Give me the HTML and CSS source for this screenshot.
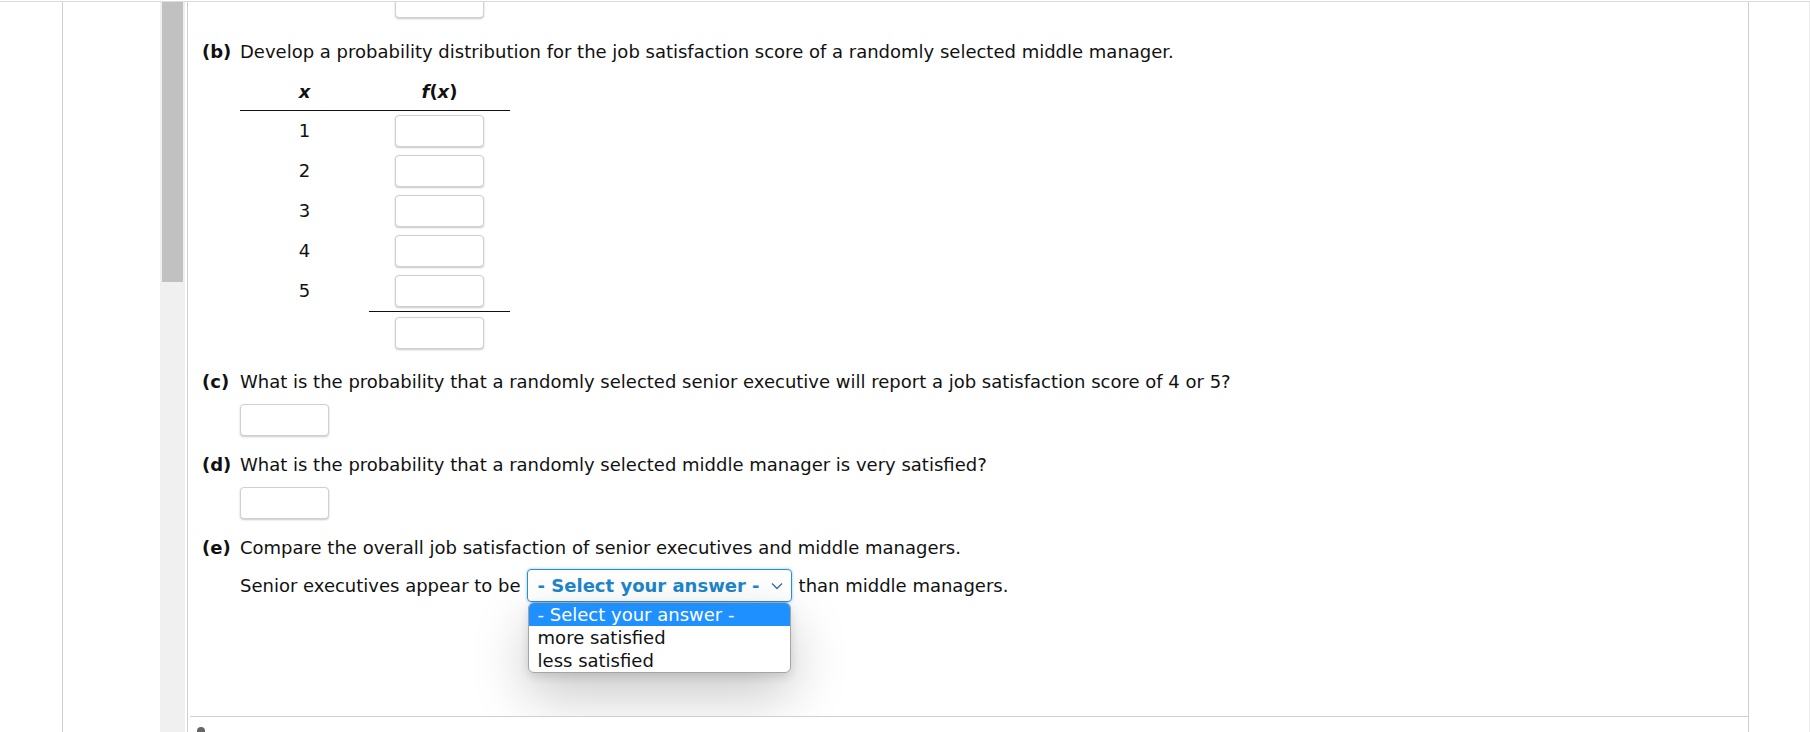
FILE: index.html
```html
<!DOCTYPE html>
<html lang="en">
<head>
<meta charset="utf-8">
<title>Probability distribution</title>
<link rel="stylesheet" href="styles.css">
</head>
<body>
<div class="page">
  <div class="gutter"></div>
  <div class="rail">
    <div class="track"><div class="thumb"></div></div>
  </div>
  <main class="main">
    <div class="qa">
      <div class="content">
        <div class="dist prev">
          <div class="cell"></div>
          <div class="cell"><span class="box"></span></div>
        </div>

        <section class="part part-b">
          <b class="lbl">(b)</b>
          <p class="q">Develop a probability distribution for the job satisfaction score of a randomly selected middle manager.</p>
          <div class="ans">
            <div class="dist">
              <div class="cell head"><i>x</i></div>
              <div class="cell head"><i>f</i>(<i>x</i>)</div>
              <div class="cell">1</div><div class="cell"><span class="box"></span></div>
              <div class="cell">2</div><div class="cell"><span class="box"></span></div>
              <div class="cell">3</div><div class="cell"><span class="box"></span></div>
              <div class="cell">4</div><div class="cell"><span class="box"></span></div>
              <div class="cell">5</div><div class="cell"><span class="box"></span></div>
              <div class="cell total"></div><div class="cell total sum"><span class="box"></span></div>
            </div>
          </div>
        </section>

        <section class="part">
          <b class="lbl">(c)</b>
          <p class="q">What is the probability that a randomly selected senior executive will report a job satisfaction score of 4 or 5?</p>
          <div class="ans single"><span class="box"></span></div>
        </section>

        <section class="part">
          <b class="lbl">(d)</b>
          <p class="q">What is the probability that a randomly selected middle manager is very satisfied?</p>
          <div class="ans single"><span class="box"></span></div>
        </section>

        <section class="part">
          <b class="lbl">(e)</b>
          <p class="q">Compare the overall job satisfaction of senior executives and middle managers.</p>
          <div class="ans sentence">
            <span>Senior executives appear to be</span>
            <span class="select-wrap">
              <span class="select">
                <span>- Select your answer -</span>
                <svg class="chev" width="12" height="8" viewBox="0 0 12 8"><polyline points="1,1.5 6,6.5 11,1.5" fill="none" stroke="#3d6f9e" stroke-width="1.4"/></svg>
              </span>
              <span class="menu">
                <span class="opt on">- Select your answer -</span>
                <span class="opt">more satisfied</span>
                <span class="opt">less satisfied</span>
              </span>
            </span>
            <span>than middle managers.</span>
          </div>
        </section>
      </div>
    </div>
    <div class="foot">
      <svg width="10" height="8" viewBox="0 0 10 8"><circle cx="5" cy="6" r="4" fill="#666"/></svg>
    </div>
  </main>
  <div class="edge"></div>
</div>
</body>
</html>
```

FILE: styles.css
```css
html, body {
  margin: 0;
  padding: 0;
  background: #fff;
}

body {
  width: 1810px;
  height: 732px;
  overflow: hidden;
  font-family: "DejaVu Sans", Verdana, sans-serif;
  font-size: 18px;
  line-height: 22px;
  color: #111;
}

.page {
  display: flex;
  margin-top: 1px;
  height: 730px;
  border-top: 1px solid #dcdcdc;
}

.gutter {
  width: 62px;
  border-right: 1px solid #cfcfcf;
  flex: none;
}

.rail {
  width: 122px;
  padding-right: 2px;
  display: flex;
  justify-content: flex-end;
  flex: none;
}

.track {
  width: 25px;
  background: #f0f0f0;
}

.thumb {
  margin: 0 2px;
  height: 280px;
  background: #c1c1c1;
}

.main {
  width: 1560px;
  flex: none;
  border-left: 1px solid #cfcfcf;
  border-right: 1px solid #cfcfcf;
  display: flex;
  flex-direction: column;
}

.edge {
  flex: 1;
  border-right: 1px solid #ececec;
}

.qa {
  height: 714px;
  margin-left: 2px;
  border-bottom: 1px solid #cfcfcf;
  overflow: hidden;
  flex: none;
}

.content {
  margin-top: -16px;
  padding-left: 12px;
  display: flex;
  flex-direction: column;
}

.foot {
  flex: 1;
  padding: 8px 0 0 8px;
  overflow: hidden;
}

.foot svg {
  display: block;
}

/* parts */
.part {
  display: grid;
  grid-template-columns: 38px 1fr;
  margin-top: 18px;
}

.part-b {
  margin-top: 23px;
}

.lbl {
  grid-column: 1;
  grid-row: 1;
  font-weight: bold;
}

.q {
  grid-column: 2;
  grid-row: 1;
  margin: 0;
}

.ans {
  grid-column: 2;
  grid-row: 2;
}

.ans.single {
  margin-top: 11px;
  height: 32px;
}

.box {
  display: block;
  width: 89px;
  height: 32px;
  box-sizing: border-box;
  border: 1px solid #d0d0d0;
  border-radius: 4px;
  background: #fff;
  box-shadow: 0 1px 2px rgba(0, 0, 0, 0.22);
}

/* distribution table */
.dist {
  display: grid;
  grid-template-columns: 129px 141px;
  margin-top: 18px;
}

.dist.prev {
  margin-top: 0;
  margin-left: 38px;
}

.cell {
  height: 40px;
  display: flex;
  align-items: center;
  justify-content: center;
}

.cell.head {
  height: 22px;
  padding-bottom: 7px;
  align-items: flex-start;
  font-weight: bold;
  border-bottom: 1px solid #111;
}

.cell.total {
  height: 37px;
  padding-top: 5px;
  align-items: flex-start;
}

.cell.sum {
  height: 36px;
  border-top: 1px solid #111;
}

.dist.prev .cell {
  height: 32px;
}

/* sentence with select */
.sentence {
  margin-top: 10px;
  display: flex;
  align-items: center;
  height: 33px;
  white-space: nowrap;
}

.select-wrap {
  position: relative;
  margin: 0 7px 0 6px;
}

.select {
  display: flex;
  align-items: center;
  justify-content: space-between;
  box-sizing: border-box;
  width: 265px;
  height: 33px;
  padding: 0 8px 0 10px;
  border: 1px solid #2b8fd6;
  border-radius: 4px;
  box-shadow: 0 0 3px rgba(43, 143, 214, 0.55);
  font-weight: bold;
  color: #1d86cc;
}

.menu {
  position: absolute;
  left: 1px;
  top: 33px;
  width: 263px;
  box-sizing: border-box;
  display: flex;
  flex-direction: column;
  background: #fff;
  border: 1px solid #a5a5a5;
  border-radius: 6px;
  overflow: hidden;
  box-shadow: 0 4px 10px rgba(0, 0, 0, 0.12), 0 22px 56px rgba(0, 0, 0, 0.22);
}

.opt {
  height: 23px;
  line-height: 23px;
  padding-left: 9px;
  color: #111;
}

.opt.on {
  background: #1e90ff;
  color: #fff;
}
```
